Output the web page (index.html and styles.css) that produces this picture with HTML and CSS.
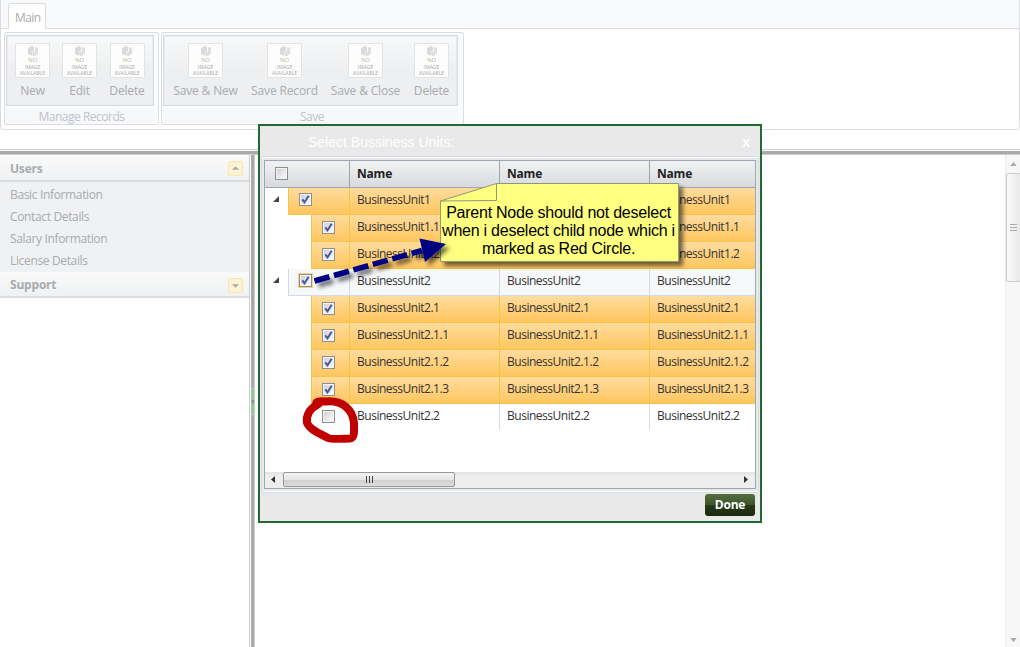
FILE: index.html
```html
<!DOCTYPE html>
<html lang="en">
<head>
<meta charset="utf-8">
<title>Users</title>
<link rel="stylesheet" href="styles.css">
</head>
<body>
<svg width="0" height="0" class="defs">
  <defs>
    <symbol id="mark" viewBox="0 0 12 12">
      <path d="M1 3.500 4.500 .8 7 2v4.500L5.500 6v3.500L4 10.500 1 9z" fill="#dadada"/>
      <path d="M8 1.800 11 3v5.500L7.500 11.500 5.500 10.500V7.500L8 6z" fill="#dfdfdf"/>
    </symbol>
    <symbol id="tick" viewBox="0 0 9 9">
      <path d="M1.300 4.300 3.500 7.300 7.700 .8" fill="none" stroke="#4659a0" stroke-width="2"/>
    </symbol>
  </defs>
</svg>
<div class="app">
  <header class="ribbon">
    <nav class="tabs"><span class="tab">Main</span></nav>
    <div class="groups">
      <section class="group manage">
        <div class="tools">
          <div class="tool"><div class="pic"><svg><use href="#mark"/></svg><b>NO</b><i>IMAGE</i><i>AVAILABLE</i></div><span>New</span></div>
          <div class="tool"><div class="pic"><svg><use href="#mark"/></svg><b>NO</b><i>IMAGE</i><i>AVAILABLE</i></div><span>Edit</span></div>
          <div class="tool"><div class="pic"><svg><use href="#mark"/></svg><b>NO</b><i>IMAGE</i><i>AVAILABLE</i></div><span>Delete</span></div>
        </div>
        <div class="caption">Manage Records</div>
      </section>
      <section class="group save">
        <div class="tools">
          <div class="tool"><div class="pic"><svg><use href="#mark"/></svg><b>NO</b><i>IMAGE</i><i>AVAILABLE</i></div><span>Save &amp; New</span></div>
          <div class="tool"><div class="pic"><svg><use href="#mark"/></svg><b>NO</b><i>IMAGE</i><i>AVAILABLE</i></div><span>Save Record</span></div>
          <div class="tool"><div class="pic"><svg><use href="#mark"/></svg><b>NO</b><i>IMAGE</i><i>AVAILABLE</i></div><span>Save &amp; Close</span></div>
          <div class="tool"><div class="pic"><svg><use href="#mark"/></svg><b>NO</b><i>IMAGE</i><i>AVAILABLE</i></div><span>Delete</span></div>
        </div>
        <div class="caption">Save</div>
      </section>
    </div>
  </header>
  <div class="splitter"></div>
  <div class="main">
    <aside class="side">
      <div class="panel-head"><span>Users</span><svg class="toggle" viewBox="0 0 15 15"><path d="M3.500 9h8L7.500 5z"/></svg></div>
      <ul class="links"><li>Basic Information</li><li>Contact Details</li><li>Salary Information</li><li>License Details</li></ul>
      <div class="panel-head support"><span>Support</span><svg class="toggle" viewBox="0 0 15 15"><path d="M3.500 6h8L7.500 10z"/></svg></div>
    </aside>
    <div class="vsplit"><div class="handle"><svg viewBox="0 0 3 5"><path d="M3 0v5L0 2.500z"/></svg></div></div>
    <div class="content"></div>
    <div class="vscroll">
      <svg class="up" viewBox="0 0 8 5"><path d="M0 5h8L4 0z"/></svg>
      <div class="vthumb"><i></i><i></i><i></i></div>
      <svg class="down" viewBox="0 0 8 5"><path d="M0 0h8L4 5z"/></svg>
    </div>
  </div>
</div>

<div class="dialog">
  <div class="title"><span>Select Bussiness Units:</span><b>x</b></div>
  <div class="frame">
    <div class="grid">
      <div class="row head"><div class="cell check"><span class="box"></span></div><div class="cell">Name</div><div class="cell">Name</div><div class="cell">Name</div></div>
      <div class="row on root"><svg class="arrow" viewBox="0 0 6 6"><path d="M0 6h6V0z"/></svg><div class="cell check"><span class="box"><svg><use href="#tick"/></svg></span></div><div class="cell">BusinessUnit1</div><div class="cell">BusinessUnit1</div><div class="cell">BusinessUnit1</div></div>
      <div class="row on child"><div class="cell check"><span class="box"><svg><use href="#tick"/></svg></span></div><div class="cell">BusinessUnit1.1</div><div class="cell">BusinessUnit1.1</div><div class="cell">BusinessUnit1.1</div></div>
      <div class="row on child"><div class="cell check"><span class="box"><svg><use href="#tick"/></svg></span></div><div class="cell">BusinessUnit1.2</div><div class="cell">BusinessUnit1.2</div><div class="cell">BusinessUnit1.2</div></div>
      <div class="row hover root"><svg class="arrow" viewBox="0 0 6 6"><path d="M0 6h6V0z"/></svg><div class="cell check"><span class="box glow"><svg><use href="#tick"/></svg></span></div><div class="cell">BusinessUnit2</div><div class="cell">BusinessUnit2</div><div class="cell">BusinessUnit2</div></div>
      <div class="row on child"><div class="cell check"><span class="box"><svg><use href="#tick"/></svg></span></div><div class="cell">BusinessUnit2.1</div><div class="cell">BusinessUnit2.1</div><div class="cell">BusinessUnit2.1</div></div>
      <div class="row on child"><div class="cell check"><span class="box"><svg><use href="#tick"/></svg></span></div><div class="cell">BusinessUnit2.1.1</div><div class="cell">BusinessUnit2.1.1</div><div class="cell">BusinessUnit2.1.1</div></div>
      <div class="row on child"><div class="cell check"><span class="box"><svg><use href="#tick"/></svg></span></div><div class="cell">BusinessUnit2.1.2</div><div class="cell">BusinessUnit2.1.2</div><div class="cell">BusinessUnit2.1.2</div></div>
      <div class="row on child"><div class="cell check"><span class="box"><svg><use href="#tick"/></svg></span></div><div class="cell">BusinessUnit2.1.3</div><div class="cell">BusinessUnit2.1.3</div><div class="cell">BusinessUnit2.1.3</div></div>
      <div class="row plain child"><div class="cell check"><span class="box"></span></div><div class="cell">BusinessUnit2.2</div><div class="cell">BusinessUnit2.2</div><div class="cell">BusinessUnit2.2</div></div>
      <div class="hscroll">
        <svg viewBox="0 0 4 7"><path d="M4 0v7L0 3.500z"/></svg>
        <div class="hthumb"><i></i><i></i><i></i></div>
        <svg viewBox="0 0 4 7"><path d="M0 0v7l4-3.500z"/></svg>
      </div>
    </div>
  </div>
  <div class="foot"><span class="done">Done</span></div>
</div>

<svg class="marks" viewBox="0 0 1020 647">
  <defs><filter id="shade" x="-20%" y="-20%" width="150%" height="150%"><feDropShadow dx="4" dy="4" stdDeviation="2" flood-color="#000" flood-opacity=".55"/></filter></defs>
  <g filter="url(#shade)">
    <path d="M496.500 183.500H678.500V261.500H440.500V201z" fill="#ffff80" stroke="#8a9a7a"/>
  </g>
  <path d="M440.500 201 496.500 200.500V183.500" fill="none" stroke="#8a9a7a"/>
  <g filter="url(#shade)">
    <path d="M314.500 281 422 250.500" fill="none" stroke="#000080" stroke-width="5.500" stroke-dasharray="15.500 4.700"/>
    <path d="M419.500 238.500 446 244 425 262z" fill="#000080"/>
  </g>
  <path d="M318.500 404C309 409 306 416 307 423 310 430 319 433 328 438Q331 439.500 350 438.500C355 438 354 430 354 423 353 411 344 400 326 401.500Q318 400.500 316.500 402.500" fill="none" stroke="#c00000" stroke-width="8" stroke-linecap="round" stroke-linejoin="round"/>
</svg>
<div class="note"><p>Parent Node should not deselect</p><p>when i deselect child node which i</p><p>marked as Red Circle.</p></div>
</body>
</html>
```
FILE: styles.css
```css
* { box-sizing: border-box; }
body { margin: 0; width: 1020px; height: 647px; overflow: hidden; position: relative; background: #fff; font: 12px/16px "Open Sans", "Noto Sans", sans-serif; color: #a9abae; }
.defs { position: absolute; }
.app { display: flex; flex-direction: column; height: 647px; }
.ribbon { height: 130px; border: 1px solid #dcdde1; border-top: 0; border-radius: 0 0 4px 4px; }
.tabs { height: 29px; padding: 3px 0 0 7px; background: #f8f9fb; border-bottom: 1px solid #dcdde1; }
.tab { display: block; width: 38px; height: 26px; padding: 6px 0 0 6px; background: #fff; border: 1px solid #dcdde1; border-bottom: 0; border-radius: 3px 3px 0 0; letter-spacing: -.6px; }
.groups { display: flex; gap: 2px; padding: 3px; }
.group { height: 93px; padding: 2px 4px 0 1px; border: 1px solid #dcdde1; border-radius: 2px; background: #fafbfd; }
.manage { width: 155px; }
.save { width: 303px; padding-right: 5px; }
.tools { display: grid; height: 71px; border: 1px solid #d9dade; box-shadow: inset 0 0 0 1px #ebecef; background: linear-gradient(#f8f9f9, #edeff1 50%, #eff0f2); padding: 7px 1px 0; }
.manage .tools { grid-template-columns: 49px 45px 50px; }
.save .tools { grid-template-columns: 81px 77px 85px 47px; }
.tool { display: flex; flex-direction: column; align-items: center; gap: 5px; white-space: nowrap; }
.tool span { letter-spacing: -.15px; }
.pic { width: 35px; height: 35px; border: 1px solid #e3e3e3; background: #fdfdfd; display: flex; flex-direction: column; align-items: center; padding-top: 1px; color: #a8a8a8; }
.pic svg { width: 12px; height: 12px; flex: none; }
.pic b, .pic i { font: normal 5px/6px "Open Sans", sans-serif; height: 6px; }
.pic b { color: #aec3a2; font-size: 6px; line-height: 7px; height: 7px; }
.caption { margin-top: 2px; height: 16px; padding-left: 3px; text-align: center; background: #f7f8fa; color: #c0c3cc; line-height: 18px; letter-spacing: -.8px; letter-spacing: -.5px; }
.splitter { height: 6px; margin-top: 19px; border-top: 1px solid #ccc; border-bottom: 1px solid #ccc; background: linear-gradient(#fff 1px, #aaa 1px); }
.main { display: flex; flex: 1; }
.side { width: 249px; }
.panel-head { height: 27px; display: flex; justify-content: space-between; align-items: center; padding: 2px 6px 0 10px; background: linear-gradient(#fafafa, #eff1f3); border-bottom: 2px solid #dadcde; font-weight: bold; letter-spacing: -.2px; }
.panel-head.support { height: 26px; }
.toggle { width: 15px; height: 15px; background: #fbf3d5; border: 1px solid #f8e8a4; border-radius: 2px; fill: #aaa; }
.links { list-style: none; margin: 0; padding: 2px 10px 0; height: 90px; background: #eff1f3; line-height: 22px; letter-spacing: -.35px; }
.vsplit { width: 6px; border-left: 1px solid #ccc; border-right: 1px solid #ccc; background: linear-gradient(90deg, #fff 1px, #aaa 1px); padding: 233px 0 0 1px; }
.handle { width: 3px; height: 27px; background: #93c793; border: solid #ccc; border-width: 1px 0; display: flex; align-items: center; }
.handle svg { width: 3px; height: 5px; fill: #888; }
.content { flex: 1; }
.vscroll { width: 15px; background: #f7f7f7; border-left: 1px solid #eee; display: flex; flex-direction: column; align-items: center; padding: 7px 0 5px; }
.vscroll svg { width: 7px; height: 4px; fill: #aaa; }
.vthumb { width: 15px; height: 109px; margin-top: 7px; border: 1px solid #ccc; border-radius: 2px; background: linear-gradient(90deg, #fafafa, #e8e8e8); display: flex; flex-direction: column; gap: 2px; justify-content: center; align-items: center; }
.vthumb i { width: 7px; height: 1px; background: #aaa; }
.down { margin-top: auto; }

.dialog { position: absolute; left: 258px; top: 124px; width: 504px; height: 399px; border: 2px solid #226932; background: #e9e9e9; }
.title { height: 30px; display: flex; justify-content: space-between; align-items: center; padding: 2px 10px 0 48px; font: 14px/16px "Liberation Sans", Arial, sans-serif; color: #fff; }
.title b { font-size: 14px; }
.frame { margin: 0 1px; height: 337px; border: 1px solid #d3dce8; border-radius: 2px; padding: 3px 3px 0 2px; box-shadow: inset 0 1px #fff, inset 0 -1px #fff; }
.grid { width: 492px; height: 329px; border: 1px solid #a0a6b0; background: #fff; display: flex; flex-direction: column; color: #333; overflow: hidden; }
.row { display: grid; height: 27px; flex: none; position: relative; }
.head { grid-template-columns: 84px 150px 150px 1fr; background: linear-gradient(#f1f2f3, #d8dadd); border-bottom: 1px solid #a0a6b0; font-weight: bold; color: #222; }
.root { margin-left: 23px; grid-template-columns: 61px 150px 150px 1fr; }
.child { margin-left: 46px; grid-template-columns: 38px 150px 150px 1fr; }
.cell { border-left: 1px solid #f4c547; padding: 3px 0 0 7px; line-height: 17px; white-space: nowrap; letter-spacing: -.48px; }
.head .cell { border-color: #a0a6b0; padding-top: 4px; letter-spacing: -.2px; }
.head .check { border: 0; padding: 6px 0 0 10px; }
.on { background: linear-gradient(#ffdc9f, #ffc65e); border-bottom: 1px solid #f4c547; }
.hover { background: #f7f8f9; border-bottom: 1px solid #d3dae8; }
.hover .cell, .plain .cell { border-color: #d3dae8; }
.plain .check, .plain .check + .cell { border-color: transparent; }
.plain { height: 26px; }
.check { padding: 6px 0 0 10px; }
.box { display: block; width: 13px; height: 13px; border: 1px solid #8e8f8f; background: linear-gradient(135deg, #c9ccd0, #fff); box-shadow: inset 0 0 0 1px #f4f4f4; padding: 1px; }
.root .box { margin-top: -1px; }
.box svg { display: block; width: 9px; height: 9px; }
.glow { outline: 1px solid #ffcf86; }
.arrow { position: absolute; left: -15px; top: 8px; width: 6px; height: 6px; fill: #444; }
.hscroll { margin-top: auto; height: 16px; flex: none; display: flex; align-items: center; padding: 0 7px 1px 6px; background: linear-gradient(#e3e3e3, #eee 4px); }
.hscroll svg { width: 4px; height: 7px; fill: #333; }
.hthumb { width: 172px; height: 15px; margin: 0 auto 0 8px; border: 1px solid #979797; border-radius: 2px; background: linear-gradient(#f3f3f3, #e6e6e6 50%, #cfcfcf 51%, #ddd); display: flex; gap: 2px; align-items: center; justify-content: center; }
.hthumb i { width: 1px; height: 7px; background: #444; }
.foot { display: flex; justify-content: flex-end; padding: 1px 5px 0; }
.done { width: 50px; height: 22px; border-radius: 3px; background: linear-gradient(#54703e, #3c5529 48%, #263a18 52%, #1b2912); color: #fff; font-weight: bold; text-align: center; line-height: 22px; letter-spacing: -.2px; }
.marks { position: absolute; left: 0; top: 0; width: 1020px; height: 647px; }
.note { position: absolute; left: 440px; top: 204px; width: 237px; text-align: center; font: 16px/18px "Liberation Sans", Arial, sans-serif; color: #000; white-space: nowrap; letter-spacing: -.24px; }
.note p { margin: 0; }
```
